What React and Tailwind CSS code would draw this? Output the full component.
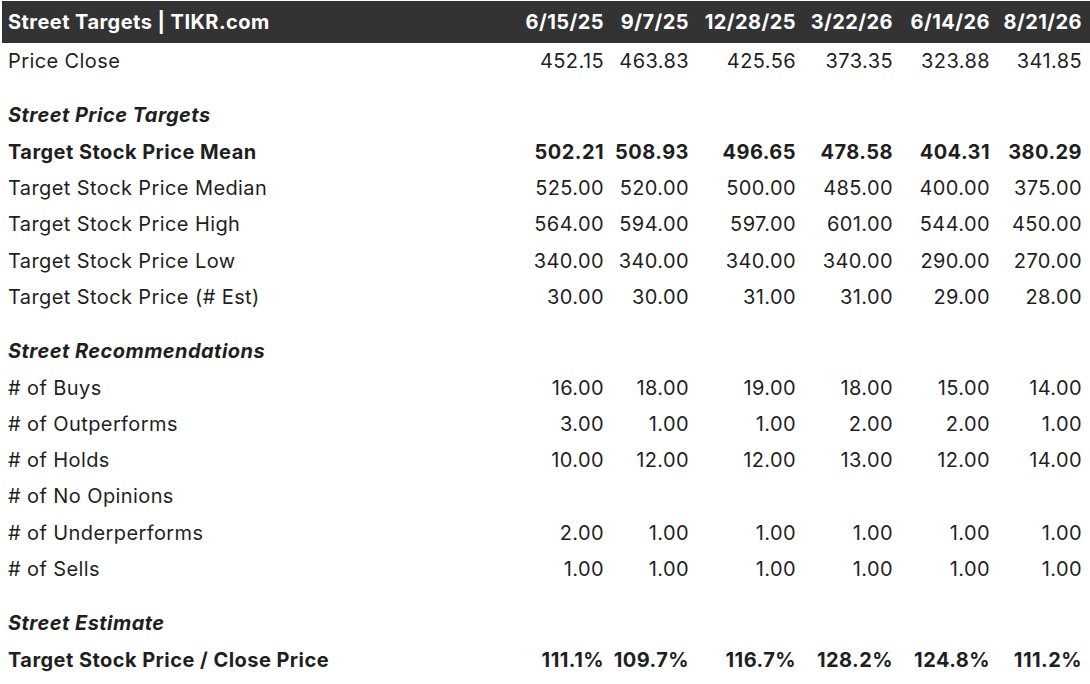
import React from "react";

const cols = ["6/15/25", "9/7/25", "12/28/25", "3/22/26", "6/14/26", "8/21/26"];

const rows = [
  { type: "row", label: "Price Close", v: ["452.15", "463.83", "425.56", "373.35", "323.88", "341.85"] },
  { type: "section", label: "Street Price Targets" },
  { type: "row", bold: true, label: "Target Stock Price Mean", v: ["502.21", "508.93", "496.65", "478.58", "404.31", "380.29"] },
  { type: "row", label: "Target Stock Price Median", v: ["525.00", "520.00", "500.00", "485.00", "400.00", "375.00"] },
  { type: "row", label: "Target Stock Price High", v: ["564.00", "594.00", "597.00", "601.00", "544.00", "450.00"] },
  { type: "row", label: "Target Stock Price Low", v: ["340.00", "340.00", "340.00", "340.00", "290.00", "270.00"] },
  { type: "row", label: "Target Stock Price (# Est)", v: ["30.00", "30.00", "31.00", "31.00", "29.00", "28.00"] },
  { type: "section", label: "Street Recommendations" },
  { type: "row", label: "# of Buys", v: ["16.00", "18.00", "19.00", "18.00", "15.00", "14.00"] },
  { type: "row", label: "# of Outperforms", v: ["3.00", "1.00", "1.00", "2.00", "2.00", "1.00"] },
  { type: "row", label: "# of Holds", v: ["10.00", "12.00", "12.00", "13.00", "12.00", "14.00"] },
  { type: "row", label: "# of No Opinions", v: ["", "", "", "", "", ""] },
  { type: "row", label: "# of Underperforms", v: ["2.00", "1.00", "1.00", "1.00", "1.00", "1.00"] },
  { type: "row", label: "# of Sells", v: ["1.00", "1.00", "1.00", "1.00", "1.00", "1.00"] },
  { type: "section", label: "Street Estimate" },
  { type: "row", bold: true, label: "Target Stock Price / Close Price", v: ["111.1%", "109.7%", "116.7%", "128.2%", "124.8%", "111.2%"] },
];

const grid = "grid grid-cols-[514px_96px_85px_107px_97px_97px_92px]";

export default function App() {
  return (
    <div className="w-[1090px] h-[684px] bg-white overflow-hidden pl-[2px] pt-[1px] text-[#1f1f1f] font-['Inter',sans-serif] tracking-[0.4px]">
      <div className={`${grid} h-[42px] items-center bg-[#333333] text-white font-bold text-[20px] tracking-[0.45px]`}>
        <div className="pl-[6px]">Street Targets | TIKR.com</div>
        {cols.map((c) => (
          <div key={c} className="text-right pr-[8px]">{c}</div>
        ))}
      </div>
      {rows.map((r, i) =>
        r.type === "section" ? (
          <div key={i} className="h-[54.3px] flex items-end pl-[6px] text-[20px] font-bold italic tracking-[0.45px]">
            <div className="h-[36.3px] flex items-center">{r.label}</div>
          </div>
        ) : (
          <div key={i} className={`${grid} h-[36.3px] items-center text-[20px] ${r.bold ? "font-bold tracking-[0.45px]" : ""}`}>
            <div className="pl-[6px]">{r.label}</div>
            {r.v.map((v, j) => (
              <div key={j} className="text-right pr-[8px]">{v}</div>
            ))}
          </div>
        )
      )}
    </div>
  );
}
